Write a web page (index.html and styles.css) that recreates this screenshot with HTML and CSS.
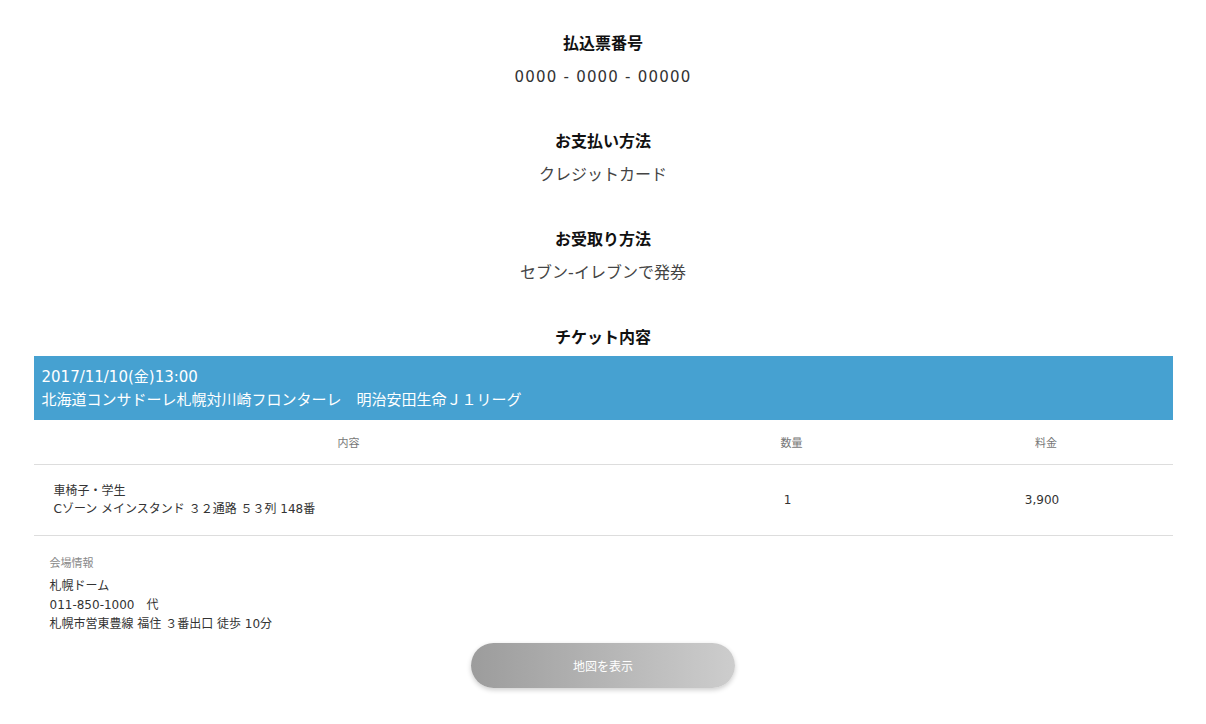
FILE: index.html
```html
<!DOCTYPE html>
<html>
<head>
    <title>購入内容確認</title>
    <link rel="stylesheet" href="styles.css">
</head>
<body>
<div class="container">
    <div class="info">
        <h3>払込票番号</h3>
        <p class="number">0000 - 0000 - 00000</p>
    </div>
    <div class="info">
        <h3>お支払い方法</h3>
        <p>クレジットカード</p>
    </div>
    <div class="info">
        <h3>お受取り方法</h3>
        <p>セブン-イレブンで発券</p>
    </div>

    <h3 class="ticket-title">チケット内容</h3>
    <div class="event">
        <div>2017/11/10(金)13:00</div>
        <div>北海道コンサドーレ札幌対川崎フロンターレ　明治安田生命Ｊ１リーグ</div>
    </div>
    <table class="ticket">
        <thead>
            <tr>
                <th class="col-item">内容</th>
                <th class="col-qty">数量</th>
                <th class="col-price">料金</th>
            </tr>
        </thead>
        <tbody>
            <tr>
                <td class="item">車椅子・学生<br>Cゾーン メインスタンド ３２通路 ５３列 148番</td>
                <td class="num">1</td>
                <td class="num">3,900</td>
            </tr>
        </tbody>
    </table>

    <div class="venue">
        <h4>会場情報</h4>
        <p>札幌ドーム</p>
        <p>011-850-1000　代</p>
        <p>札幌市営東豊線 福住 ３番出口 徒歩 10分</p>
    </div>

    <div class="actions">
        <button type="button">地図を表示</button>
    </div>
</div>
</body>
</html>
```

FILE: styles.css
```css
body {
    font-family: "DejaVu Sans", "Noto Sans CJK JP", sans-serif;
    background-color: #fff;
    color: #333;
    margin: 0;
    padding: 0;
}
.container {
    width: 1139px;
    margin: 0 auto;
    padding-top: 32px;
}
h3 {
    margin: 0;
    font-size: 16px;
    line-height: 24px;
    font-weight: bold;
    color: #111;
    text-align: center;
}
.info {
    text-align: center;
    margin-bottom: 41px;
}
.info p {
    margin: 9px 0 0;
    font-size: 16px;
    line-height: 24px;
    color: #444;
}
.info .number {
    font-size: 15px;
    letter-spacing: 1.2px;
    color: #333;
}
.ticket-title {
    margin-bottom: 6px;
}
.event {
    background-color: #46a1d1;
    color: #fff;
    font-size: 15px;
    line-height: 23px;
    padding: 10px 8px 8px;
}
.ticket {
    width: 100%;
    border-collapse: collapse;
}
.ticket th {
    height: 44px;
    padding: 0;
    font-size: 11px;
    font-weight: normal;
    color: #777;
    border-bottom: 1px solid #ddd;
}
.col-item {
    width: 630px;
}
.col-qty {
    width: 256px;
}
.ticket td {
    height: 70px;
    padding: 0;
    font-size: 12px;
    line-height: 18px;
    color: #333;
    border-bottom: 1px solid #ddd;
}
.ticket .item {
    padding-left: 20px;
}
.ticket .num {
    text-align: center;
    padding-right: 8px;
}
.venue {
    padding: 19px 16px 0;
}
.venue h4 {
    margin: 0 0 4px;
    font-size: 11px;
    line-height: 18px;
    font-weight: normal;
    color: #888;
}
.venue p {
    margin: 0;
    font-size: 12px;
    line-height: 19px;
    color: #333;
}
.actions {
    text-align: center;
    padding-top: 9px;
    padding-bottom: 30px;
}
button {
    width: 264px;
    height: 45px;
    border: none;
    border-radius: 23px;
    background: linear-gradient(to right, #9c9c9c, #cdcdcd);
    box-shadow: 0 2px 5px rgba(0, 0, 0, 0.2);
    color: #fff;
    font-family: "DejaVu Sans", "Noto Sans CJK JP", sans-serif;
    font-size: 12px;
    cursor: pointer;
}
```
